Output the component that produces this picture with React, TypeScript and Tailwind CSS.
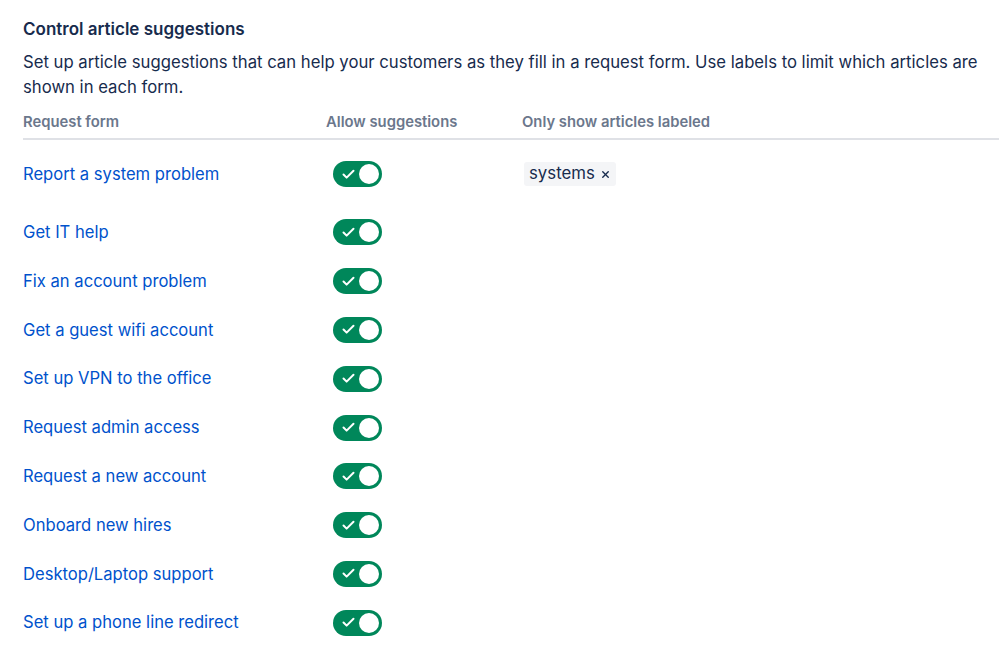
import { Check, X } from "lucide-react";

const forms = [
  { name: "Report a system problem", labels: ["systems"] },
  { name: "Get IT help", labels: [] },
  { name: "Fix an account problem", labels: [] },
  { name: "Get a guest wifi account", labels: [] },
  { name: "Set up VPN to the office", labels: [] },
  { name: "Request admin access", labels: [] },
  { name: "Request a new account", labels: [] },
  { name: "Onboard new hires", labels: [] },
  { name: "Desktop/Laptop support", labels: [] },
  { name: "Set up a phone line redirect", labels: [] },
];

function Toggle() {
  return (
    <div className="ml-[7px] flex h-[26px] w-[49px] items-center justify-between rounded-full bg-[#00875a] pl-[8px] pr-[3px]">
      <Check className="h-[15px] w-[15px] text-white" strokeWidth={3.2} />
      <div className="h-[20px] w-[20px] rounded-full bg-white" />
    </div>
  );
}

export default function App() {
  return (
    <div className="min-h-screen bg-white pl-[23px] pt-[17px] font-['Inter',sans-serif] text-[#172b4d]">
      <h2 className="text-[17px] font-semibold leading-6">
        Control article suggestions
      </h2>
      <p className="mt-[9px] pr-[18px] text-[16.7px] leading-[25px]">
        Set up article suggestions that can help your customers as they fill in
        a request form. Use labels to limit which articles are shown in each
        form.
      </p>

      <div className="mt-[12px] grid grid-cols-[303px_196px_1fr] border-b-2 border-[#dfe1e6] pb-[6px] text-[14.8px] font-semibold leading-5 text-[#6b778c]">
        <div>Request form</div>
        <div>Allow suggestions</div>
        <div>Only show articles labeled</div>
      </div>

      <div className="pt-[9px]">
        {forms.map((f, i) => (
          <div
            key={f.name}
            className={`grid grid-cols-[303px_196px_1fr] items-center ${
              i === 0 ? "mb-[9px] h-[50px]" : "h-[48.8px]"
            }`}
          >
            <a className="cursor-pointer text-[16.6px] text-[#0052cc]">
              {f.name}
            </a>
            <Toggle />
            <div className="flex gap-1">
              {f.labels.map((l) => (
                <span
                  key={l}
                  className="ml-[2px] flex h-[24px] items-center gap-[5px] rounded-[3px] bg-[#f4f5f7] pl-[5px] pr-[5px] text-[16.8px] text-[#172b4d]"
                >
                  {l}
                  <X className="h-[11px] w-[11px]" strokeWidth={3} />
                </span>
              ))}
            </div>
          </div>
        ))}
      </div>
    </div>
  );
}
